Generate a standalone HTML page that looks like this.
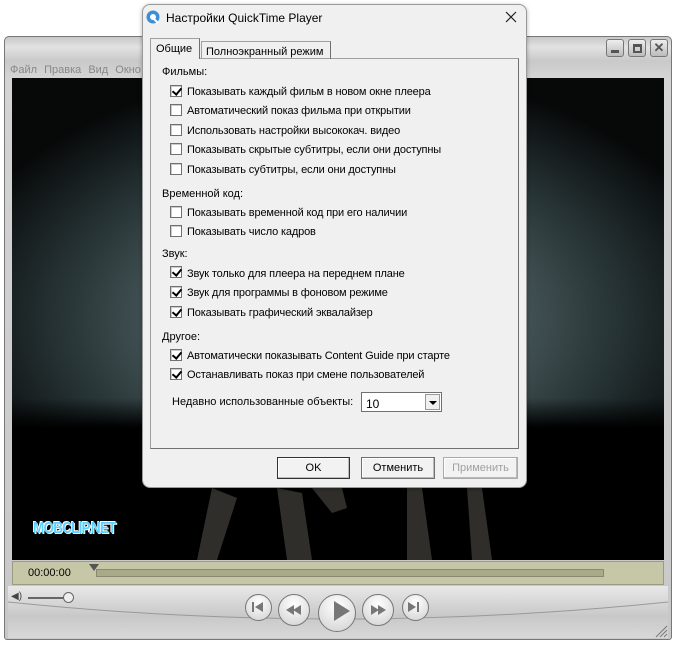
<!DOCTYPE html>
<html><head><meta charset="utf-8"><style>
*{margin:0;padding:0;box-sizing:border-box}
body{width:674px;height:646px;background:#fff;position:relative;overflow:hidden;font-family:"Liberation Sans",sans-serif;font-size:11px;color:#000}
.a{position:absolute}
.pl{left:4px;top:36px;width:668px;height:604px;border:1px solid #777;border-radius:5px 5px 3px 3px;background:linear-gradient(#c8c8c8,#e2e2e2 10px,#c9c9c9 24px,#d4d4d4 40px,#c8c8c8);}
.vid{left:12px;top:78px;width:652px;height:482px;background:radial-gradient(ellipse 400px 250px at 50% 240px,#62757a 0%,#4a5b5d 40%,#243032 72%,#070909 100%);overflow:hidden}
.vidb{left:0;top:320px;width:652px;height:162px;background:linear-gradient(rgba(0,0,0,0),#000 30px)}
.tb{left:12px;top:561px;width:652px;height:24px;background:#c6c7a6;border:1px solid #9a9b80}
.ctl{left:8px;top:586px;width:660px;height:52px;background:linear-gradient(#e8e8e8,#c8c8c8 30px,#d8d8d8)}
.btn{border:1px solid #777;border-radius:50%;background:radial-gradient(circle at 50% 30%,#fff,#d0d0d0);}
.dlg{left:142px;top:4px;width:385px;height:484px;background:#f0f0f0;border:1px solid #9a9a9a;border-radius:8px;box-shadow:0 1px 4px rgba(0,0,0,.3)}
.panel{left:150px;top:58px;width:369px;height:391px;border:1px solid #a0a0a0;border-right-color:#707070;border-bottom-color:#707070;background:#f0f0f0}
.cb{position:absolute;left:170px;width:12px;height:12px;border:1px solid #707070;background:#fff;box-shadow:inset 1px 1px 0 #ccc}
.cb.c::after{content:"";position:absolute;left:3px;top:0px;width:4px;height:7px;border:solid #000;border-width:0 2px 2px 0;transform:rotate(40deg)}
.t{position:absolute;left:187px;white-space:nowrap;letter-spacing:-.15px}
.h{position:absolute;left:162px;white-space:nowrap}
.bt{position:absolute;top:457px;height:22px;border:1px solid #707070;background:#f2f2f2;text-align:center;line-height:20px;box-shadow:inset -1px -1px 0 #bbb,inset 1px 1px 0 #fff}
</style></head><body>
<div class="a pl"></div>
<div class="a" style="left:10px;top:64px;color:#888;font-size:11px;word-spacing:4px">Файл Правка Вид Окно</div>
<div class="a" style="left:606px;top:39px;width:18px;height:18px;border:1px solid #777;border-radius:3px;background:linear-gradient(#eee,#bbb)"><div class="a" style="left:4px;top:10px;width:8px;height:3px;background:#555"></div></div>
<div class="a" style="left:628px;top:39px;width:18px;height:18px;border:1px solid #777;border-radius:3px;background:linear-gradient(#eee,#bbb)"><div class="a" style="left:4px;top:4px;width:9px;height:9px;border:2px solid #555;border-top-width:3px"></div></div>
<div class="a" style="left:650px;top:39px;width:18px;height:18px;border:1px solid #777;border-radius:3px;background:linear-gradient(#eee,#bbb);text-align:center;font-weight:bold;color:#555;line-height:16px;font-size:13px">✕</div>
<div class="a vid"><div class="a vidb"></div>
<svg class="a" style="left:0;top:410px" width="652" height="72"><path d="M200 0 L185 72 L205 72 L225 10Z M265 0 L275 72 L300 72 L290 5Z M395 0 L395 72 L420 72 L410 0Z M455 0 L460 72 L480 72 L470 0Z M300 0 L320 25 L335 20 L330 0Z" fill="#6a6560" opacity=".45"/></svg></div>
<div class="a" style="left:33px;top:520px;color:#5ad0ff;font-weight:bold;font-size:16px;letter-spacing:-1px;transform:scaleX(.85);transform-origin:left;text-shadow:0 0 1px #fff,1px 1px 0 #fff,-1px -1px 0 #fff">MOBCLIP.NET</div>
<div class="a tb"></div>
<div class="a" style="left:28px;top:567px;font-size:11px">00:00:00</div>
<div class="a" style="left:96px;top:569px;width:508px;height:8px;background:#a8aa8a;border:1px solid #888a70"></div>
<div class="a" style="left:89px;top:564px;width:0;height:0;border-left:5px solid transparent;border-right:5px solid transparent;border-top:7px solid #555"></div>
<div class="a ctl"></div>
<svg class="a" style="left:8px;top:600px" width="660" height="40"><path d="M0 2 Q330 36 660 2" stroke="#999" fill="none"/></svg>
<div class="a" style="left:11px;top:591px;font-size:10px;color:#444">◀)</div>
<div class="a" style="left:28px;top:597px;width:40px;height:2px;background:#666"></div>
<div class="a" style="left:63px;top:592px;width:11px;height:11px;border-radius:50%;border:1px solid #666;background:#eee"></div>
<div class="a btn" style="left:245px;top:594px;width:27px;height:27px"></div>
<div class="a btn" style="left:278px;top:594px;width:32px;height:32px"></div>
<div class="a btn" style="left:318px;top:594px;width:38px;height:38px"></div>
<div class="a btn" style="left:362px;top:594px;width:32px;height:32px"></div>
<div class="a btn" style="left:402px;top:594px;width:27px;height:27px"></div>
<svg class="a" style="left:240px;top:590px" width="200" height="46"><g fill="#777"><rect x="12" y="12" width="2" height="10"/><path d="M15 17 L23 12 L23 22Z"/><path d="M46 20 L54 15 L54 25Z M53 20 L61 15 L61 25Z"/><path d="M94 11 L94 31 L110 21Z"/><path d="M131 15 L139 20 L131 25Z M138 15 L146 20 L138 25Z"/><path d="M168 12 L176 17 L168 22Z"/><rect x="177" y="12" width="2" height="10"/></g></svg>
<svg class="a" style="left:654px;top:624px" width="14" height="14"><path d="M13 2 L2 13 M13 6 L6 13 M13 10 L10 13" stroke="#777"/></svg>

<div class="a dlg"></div>
<svg class="a" style="left:145px;top:9px" width="16" height="16"><circle cx="8" cy="8" r="6.5" fill="#3a8fd6"/><circle cx="8" cy="8" r="3" fill="#fff"/><path d="M9 10 L13 14" stroke="#fff" stroke-width="2"/></svg>
<div class="a" style="left:166px;top:11px;font-size:12px">Настройки QuickTime Player</div>
<svg class="a" style="left:505px;top:11px" width="12" height="12"><path d="M1 1 L11 11 M11 1 L1 11" stroke="#222" stroke-width="1.2"/></svg>
<div class="a panel"></div>
<div class="a" style="left:201px;top:41px;width:130px;height:18px;border:1px solid #a0a0a0;border-bottom:none;border-right-color:#707070;padding:4px 0 0 4px">Полноэкранный режим</div>
<div class="a" style="left:150px;top:38px;width:50px;height:21px;border:1px solid #a0a0a0;border-bottom:none;border-right-color:#707070;background:#f0f0f0;padding:4px 0 0 5px">Общие</div>
<div class="h" style="top:66px">Фильмы:</div>
<div class="cb c" style="top:85px"></div><div class="t" style="top:86px">Показывать каждый фильм в новом окне плеера</div>
<div class="cb" style="top:104px"></div><div class="t" style="top:105px">Автоматический показ фильма при открытии</div>
<div class="cb" style="top:124px"></div><div class="t" style="top:125px">Использовать настройки высококач. видео</div>
<div class="cb" style="top:143px"></div><div class="t" style="top:144px">Показывать скрытые субтитры, если они доступны</div>
<div class="cb" style="top:163px"></div><div class="t" style="top:164px">Показывать субтитры, если они доступны</div>
<div class="h" style="top:188px">Временной код:</div>
<div class="cb" style="top:206px"></div><div class="t" style="top:207px">Показывать временной код при его наличии</div>
<div class="cb" style="top:225px"></div><div class="t" style="top:226px">Показывать число кадров</div>
<div class="h" style="top:248px">Звук:</div>
<div class="cb c" style="top:266px"></div><div class="t" style="top:268px">Звук только для плеера на переднем плане</div>
<div class="cb c" style="top:286px"></div><div class="t" style="top:287px">Звук для программы в фоновом режиме</div>
<div class="cb c" style="top:306px"></div><div class="t" style="top:307px">Показывать графический эквалайзер</div>
<div class="h" style="top:331px">Другое:</div>
<div class="cb c" style="top:349px"></div><div class="t" style="top:350px">Автоматически показывать Content Guide при старте</div>
<div class="cb c" style="top:368px"></div><div class="t" style="top:369px">Останавливать показ при смене пользователей</div>
<div class="a" style="left:172px;top:396px;white-space:nowrap">Недавно использованные объекты:</div>
<div class="a" style="left:361px;top:392px;width:81px;height:20px;border:1px solid #707070;background:#fff;padding:4px 0 0 4px;font-size:12px">10</div>
<div class="a" style="left:425px;top:394px;width:15px;height:16px;background:#f0f0f0;border:1px solid #999"><div class="a" style="left:3px;top:6px;border-left:4px solid transparent;border-right:4px solid transparent;border-top:4px solid #000"></div></div>
<div class="bt" style="left:277px;width:73px;border-color:#333">OK</div>
<div class="bt" style="left:361px;width:74px">Отменить</div>
<div class="bt" style="left:443px;width:75px;color:#a0a0a0;border-color:#aaa">Применить</div>
</body></html>
